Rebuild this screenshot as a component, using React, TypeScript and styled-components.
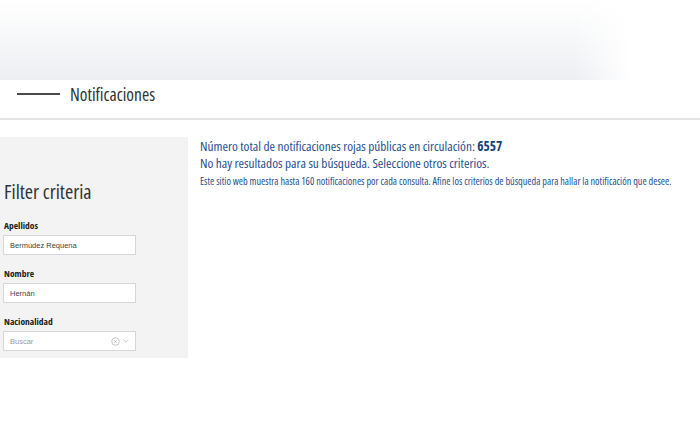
import React from 'react';
import styled, { createGlobalStyle } from 'styled-components';

const condensed = `'Open Sans', 'DejaVu Sans', sans-serif`;

const GlobalStyle = createGlobalStyle`
  html, body {
    margin: 0;
    padding: 0;
    background: #ffffff;
    font-family: 'Liberation Sans', sans-serif;
  }
`;

const Page = styled.div`
  width: 700px;
  height: 438px;
  overflow: hidden;
  background: #fff;
`;

const Hero = styled.div`
  height: 80px;
  background: linear-gradient(to bottom, #ffffff 0%, #f8f9fa 40%, #f1f2f5 80%, #eceef1 100%);
  -webkit-mask-image: linear-gradient(to right, #000 0%, #000 82%, transparent 90%);
  mask-image: linear-gradient(to right, #000 0%, #000 82%, transparent 90%);
`;

const TitleBar = styled.div`
  height: 40px;
  box-sizing: border-box;
  display: flex;
  align-items: center;
  gap: 10px;
  padding: 0 0 10px 17px;
  border-bottom: 2px solid #e4e4e4;
`;

const Dash = styled.span`
  width: 43px;
  height: 1.5px;
  background: #4a4a4a;
`;

const Title = styled.h1`
  margin: 0;
  font-family: ${condensed};
  font-stretch: 75%;
  font-weight: 400;
  font-size: 17.5px;
  line-height: 22px;
  color: #333;
`;

const Body = styled.div`
  display: flex;
  margin-top: 17px;
`;

const Sidebar = styled.aside`
  flex: 0 0 188px;
  height: 221px;
  box-sizing: border-box;
  background: #f3f3f3;
  padding: 43px 0 0 3px;
`;

const SideTitle = styled.h2`
  margin: 0 0 16px 1px;
  font-family: ${condensed};
  font-stretch: 75%;
  font-weight: 400;
  font-size: 20px;
  line-height: 24px;
  color: #333;
`;

const Field = styled.div`
  margin-bottom: 13px;
`;

const Label = styled.div`
  font-family: ${condensed};
  font-stretch: 75%;
  font-weight: 700;
  font-size: 9.5px;
  line-height: 12px;
  color: #222;
  margin: 0 0 3px 1px;
`;

const InputBox = styled.div<{ $placeholder?: boolean }>`
  width: 133px;
  height: 20px;
  box-sizing: border-box;
  background: #fff;
  border: 1px solid #d6d6d6;
  display: flex;
  align-items: center;
  padding: 0 5px 0 6px;
  font-family: 'Liberation Sans', Arial, sans-serif;
  font-size: 7.5px;
  color: ${({ $placeholder }) => ($placeholder ? '#9a9a9a' : '#444')};
`;

const Grow = styled.span`
  flex: 1;
`;

const SelectIcons = styled.span`
  display: flex;
  align-items: center;
  gap: 2px;
  color: #b8b8b8;
`;

const Content = styled.section`
  flex: 1;
  min-width: 0;
  padding: 1px 0 0 12px;
  color: #1f4f8f;
  font-family: ${condensed};
  font-stretch: 75%;
`;

const Lead = styled.p`
  margin: 0;
  font-size: 13.3px;
  line-height: 17px;
`;

const Count = styled.strong`
  font-weight: 700;
  color: #173f78;
`;

const Note = styled.p`
  margin: 3px 0 0;
  font-size: 10.2px;
  line-height: 13px;
`;

const ClearIcon = () => (
  <svg width="9" height="9" viewBox="0 0 10 10" fill="none" stroke="currentColor" strokeWidth="0.9">
    <circle cx="5" cy="5" r="4.2" />
    <path d="M3.5 3.5l3 3M6.5 3.5l-3 3" />
  </svg>
);

const ChevronIcon = () => (
  <svg width="8" height="8" viewBox="0 0 10 10" fill="none" stroke="currentColor" strokeWidth="1">
    <path d="M2 3.5l3 3 3-3" />
  </svg>
);

export default function App() {
  return (
    <>
      <GlobalStyle />
      <Page>
        <Hero />
        <TitleBar>
          <Dash />
          <Title>Notificaciones</Title>
        </TitleBar>
        <Body>
          <Sidebar>
            <SideTitle>Filter criteria</SideTitle>
            <Field>
              <Label>Apellidos</Label>
              <InputBox>Bermúdez Requena</InputBox>
            </Field>
            <Field>
              <Label>Nombre</Label>
              <InputBox>Hernán</InputBox>
            </Field>
            <Field>
              <Label>Nacionalidad</Label>
              <InputBox $placeholder>
                <Grow>Buscar</Grow>
                <SelectIcons>
                  <ClearIcon />
                  <ChevronIcon />
                </SelectIcons>
              </InputBox>
            </Field>
          </Sidebar>
          <Content>
            <Lead>
              Número total de notificaciones rojas públicas en circulación: <Count>6557</Count>
            </Lead>
            <Lead>No hay resultados para su búsqueda. Seleccione otros criterios.</Lead>
            <Note>
              Este sitio web muestra hasta 160 notificaciones por cada consulta. Afine los criterios de búsqueda para hallar la notificación que desee.
            </Note>
          </Content>
        </Body>
      </Page>
    </>
  );
}
